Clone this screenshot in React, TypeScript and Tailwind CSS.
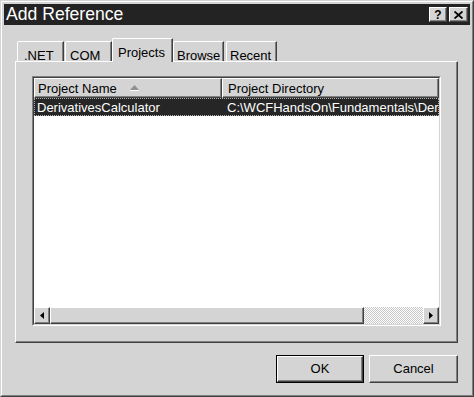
import React from 'react';

// raised 3D edge, classic style
const raised =
  'border border-t-white border-l-white border-r-[#404040] border-b-[#404040] shadow-[inset_-1px_-1px_0_#808080]';

const tabs = [
  { label: '.NET', cls: 'ml-[2px] w-[47px] pl-[6px]' },
  { label: 'COM', cls: 'ml-[1px] w-[47px] pl-[4px]' },
  { label: 'Projects', cls: 'w-[61px] pl-[5px]', active: true },
  { label: 'Browse', cls: 'w-[51px] pl-[3px]' },
  { label: 'Recent', cls: 'ml-[2px] w-[51px] pl-[3px]' },
];

const Arrow: React.FC<{ dir: 'left' | 'right' }> = ({ dir }) => (
  <svg width="4" height="7" viewBox="0 0 4 7">
    {dir === 'left' ? <polygon points="4,0 4,7 0,3.5" fill="#000" /> : <polygon points="0,0 0,7 4,3.5" fill="#000" />}
  </svg>
);

const App: React.FC = () => {
  return (
    <div className="w-[474px] h-[397px] bg-[#d4d4d4] border border-t-[#d4d4d4] border-l-[#d4d4d4] border-r-[#404040] border-b-[#404040] font-['Liberation_Sans',Arial,sans-serif] text-black select-none">
      <div className="h-full border border-t-white border-l-white border-r-[#808080] border-b-[#808080] p-[2px] flex flex-col">
        {/* title bar */}
        <div className="h-[21px] bg-[#232323] flex items-center pl-[2px] pr-[2px]">
          <span className="text-white text-[17.6px] leading-none flex-1">Add Reference</span>
          <div className="flex gap-[2px]">
            <div className={`w-[18px] h-[15px] bg-[#d4d4d4] flex items-center justify-center text-[12px] font-bold leading-none ${raised}`}>?</div>
            <div className={`w-[19px] h-[15px] bg-[#d4d4d4] flex items-center justify-center ${raised}`}>
              <svg width="9" height="8" viewBox="0 0 9 8">
                <path d="M0.5 0.5 L8.5 7.5 M8.5 0.5 L0.5 7.5" stroke="#000" strokeWidth="1.8" />
              </svg>
            </div>
          </div>
        </div>

        <div className="pl-[11px] pt-[13px] flex flex-col">
          {/* tabs */}
          <div className="h-[23px] flex items-end text-[13px]">
            {tabs.map((t) =>
              t.active ? (
                <div
                  key={t.label}
                  className={`${t.cls} h-[24px] -mb-px relative z-10 bg-[#d4d4d4] border-t border-l border-r border-t-white border-l-white border-r-[#404040] shadow-[inset_-1px_0_0_#808080] rounded-tl-[2px] pt-[4px]`}
                >
                  {t.label}
                </div>
              ) : (
                <div
                  key={t.label}
                  className={`${t.cls} h-[20px] border-t border-l border-r border-t-white border-l-white border-r-[#404040] shadow-[inset_-1px_0_0_#808080] rounded-tl-[2px] pt-[4px]`}
                >
                  {t.label}
                </div>
              )
            )}
          </div>

          {/* tab panel */}
          <div className="w-[443px] h-[282px] border border-t-white border-l-white border-r-[#404040] border-b-[#404040] shadow-[inset_-1px_-1px_0_#808080] pt-[14px] px-[16px]">
            <div className="w-[409px] h-[250px] border border-t-[#808080] border-l-[#808080] border-r-white border-b-white">
              <div className="h-full border border-t-[#404040] border-l-[#404040] border-r-[#d4d4d4] border-b-[#d4d4d4] bg-white flex flex-col text-[13px]">
                {/* header */}
                <div className="h-[20px] flex bg-[#d4d4d4]">
                  <div className={`w-[188px] flex items-center pl-[3px] pt-[2px] gap-[13px] ${raised}`}>
                    <span>Project Name</span>
                    <svg width="9" height="6" viewBox="0 0 9 6" className="-mt-[2px]">
                      <polygon points="4.5,0 9,5 0,5" fill="#909090" />
                      <line x1="0" y1="5.5" x2="9" y2="5.5" stroke="#fff" />
                    </svg>
                  </div>
                  <div className={`flex-1 flex items-center pl-[5px] pt-[2px] ${raised}`}>Project Directory</div>
                </div>
                {/* selected row */}
                <div className="h-[18px] flex items-center pt-[1px] bg-[#262626] text-white border border-dotted border-[#b0b0b0] whitespace-nowrap overflow-hidden">
                  <div className="w-[187px] pl-[2px] shrink-0">DerivativesCalculator</div>
                  <div className="pl-[5px] min-w-0 overflow-hidden">C:\WCFHandsOn\Fundamentals\Deriv</div>
                </div>
                <div className="flex-1" />
                {/* horizontal scrollbar */}
                <div className="h-[17px] flex">
                  <div className={`w-[16px] bg-[#d4d4d4] flex items-center justify-center ${raised}`}>
                    <Arrow dir="left" />
                  </div>
                  <div className={`w-[314px] bg-[#d4d4d4] ${raised}`} />
                  <div className="flex-1 bg-[repeating-conic-gradient(#c8c8c8_0_25%,#ffffff_0_50%)] bg-[length:2px_2px]" />
                  <div className={`w-[16px] bg-[#d4d4d4] flex items-center justify-center ${raised}`}>
                    <Arrow dir="right" />
                  </div>
                </div>
              </div>
            </div>
          </div>

          {/* buttons */}
          <div className="w-[443px] mt-[12px] flex justify-end gap-[5px] text-[13px]">
            <div className="w-[88px] h-[28px] border border-black">
              <div className={`h-full flex items-center justify-center ${raised}`}>OK</div>
            </div>
            <div className={`w-[89px] h-[28px] flex items-center justify-center ${raised}`}>Cancel</div>
          </div>
        </div>
      </div>
    </div>
  );
};

export default App;
